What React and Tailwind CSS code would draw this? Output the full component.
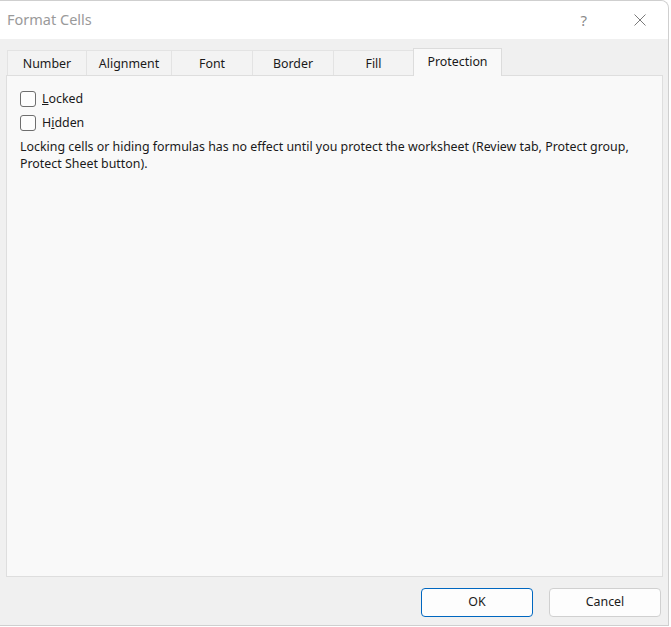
import { useState } from 'react';

const tabs = [
  { label: 'Number', width: 'w-[79px]' },
  { label: 'Alignment', width: 'w-[85px]' },
  { label: 'Font', width: 'w-[81px]' },
  { label: 'Border', width: 'w-[81px]' },
  { label: 'Fill', width: 'w-[80px]' },
  { label: 'Protection', width: 'w-[89px]' },
];

function Checkbox({ checked, onChange, accessKey, rest }) {
  return (
    <label className="flex h-[24px] items-center gap-[6px] text-[#1a1a1a]">
      <span
        onClick={onChange}
        className={`h-[16px] w-[16px] rounded-[3px] border ${checked ? 'border-[#0067c0] bg-[#0067c0]' : 'border-[#6e6e6e] bg-[#fdfdfd]'}`}
      />
      <span>
        {rest[0]}
        <span className="underline">{accessKey}</span>
        {rest[1]}
      </span>
    </label>
  );
}

export default function App() {
  const [locked, setLocked] = useState(false);
  const [hidden, setHidden] = useState(false);

  return (
    <div className="h-[627px] w-[671px] bg-white font-['Segoe_UI','Noto_Sans',sans-serif] text-[12.4px]">
      <div className="flex h-[626px] w-[669px] flex-col overflow-hidden rounded-tr-[8px] border-t border-r border-b border-[#cfcfcf] bg-[#f0f0f0]">
        <div className="flex h-[38px] shrink-0 items-center bg-white">
          <span className="pl-[7px] text-[14.5px] text-[#9a9a9a]">Format Cells</span>
          <span className="ml-auto mr-[47px] text-[15px] text-[#8a8a8a]">?</span>
          <svg viewBox="0 0 12 12" className="mr-[22px] h-[12px] w-[12px]" aria-hidden="true">
            <path d="M0.5 0.5 L11.5 11.5 M11.5 0.5 L0.5 11.5" stroke="#7a7a7a" strokeWidth="1" fill="none" />
          </svg>
        </div>

        <div className="flex flex-1 flex-col px-[6px] pt-[9px]">
          <div className="flex h-[27px] items-end pl-[1px]">
            {tabs.map((tab) =>
              tab.label === 'Protection' ? (
                <div
                  key={tab.label}
                  className={`${tab.width} relative -mb-px flex h-[28px] items-center justify-center border border-b-0 border-[#dcdcdc] bg-[#f9f9f9] text-[#1a1a1a]`}
                >
                  {tab.label}
                </div>
              ) : (
                <div
                  key={tab.label}
                  className={`${tab.width} flex h-[25px] items-center justify-center border border-b-0 border-r-0 border-[#e3e3e3] bg-[#f3f3f3] pt-[2px] text-[#1a1a1a]`}
                >
                  {tab.label}
                </div>
              )
            )}
          </div>

          <div className="h-[502px] w-[657px] border border-[#dedede] bg-[#f9f9f9] px-[13px] pt-[11px]">
            <Checkbox checked={locked} onChange={() => setLocked(!locked)} accessKey="L" rest={['', 'ocked']} />
            <Checkbox checked={hidden} onChange={() => setHidden(!hidden)} accessKey="i" rest={['H', 'dden']} />
            <p className="mt-[3px] leading-[17px] text-[#1a1a1a]">
              Locking cells or hiding formulas has no effect until you protect the worksheet (Review tab, Protect group,
              Protect Sheet button).
            </p>
          </div>

          <div className="flex justify-end gap-[16px] pr-[1px] pt-[11px]">
            <button
              type="button"
              className="h-[29px] w-[112px] rounded-[4px] border border-[#0067c0] bg-[#fdfdfd] text-[#1a1a1a]"
            >
              OK
            </button>
            <button
              type="button"
              className="h-[29px] w-[112px] rounded-[4px] border border-[#d0d0d0] bg-[#fdfdfd] text-[#1a1a1a]"
            >
              Cancel
            </button>
          </div>
        </div>
      </div>
    </div>
  );
}
